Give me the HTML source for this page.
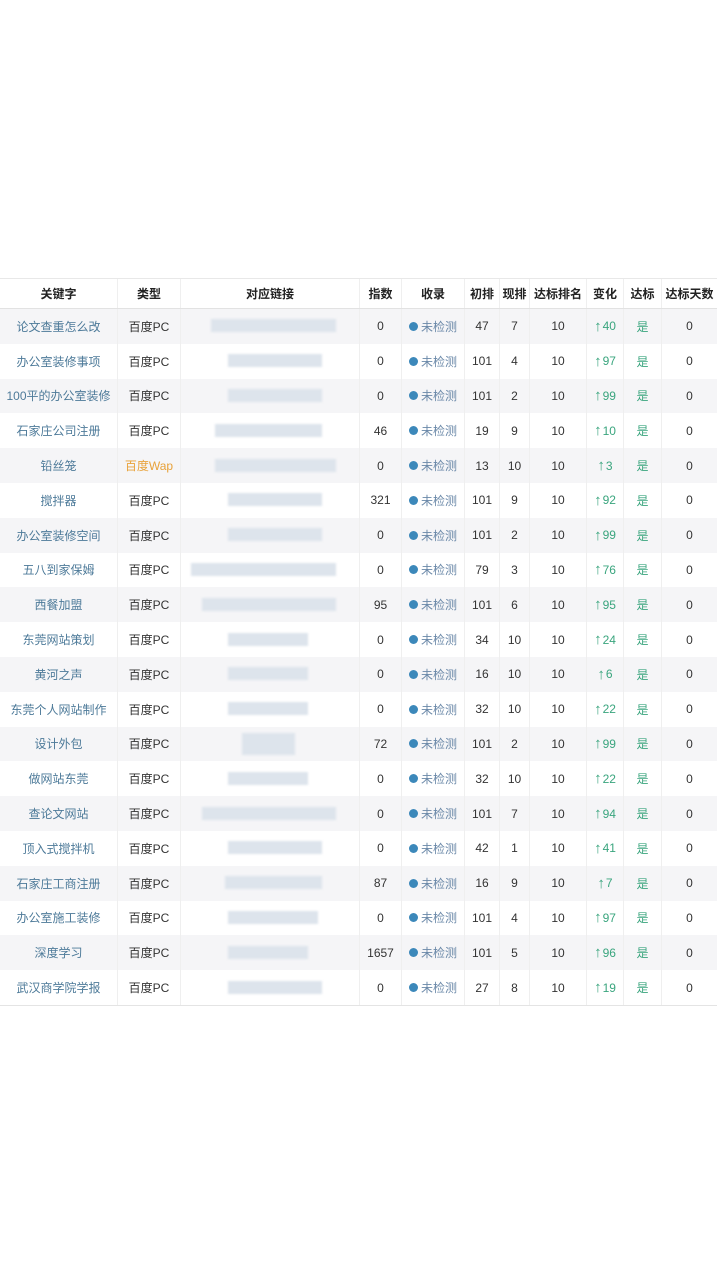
<!DOCTYPE html>
<html><head><meta charset="utf-8"><style>
html,body{margin:0;padding:0;background:#fff;width:720px;height:1280px;overflow:hidden}
body{font-family:"Liberation Sans","Noto Sans CJK SC",sans-serif;font-size:12px;color:#333;position:relative}
.tb{position:absolute;left:0;top:278px;width:717px;border-top:1px solid #e8e8e8;border-bottom:1px solid #e4e4e4}
.r{display:flex;height:34.8px;align-items:center;position:relative}
.h{height:29px;font-weight:bold;color:#222;border-bottom:1px solid #e2e2e2;background:#fff}
.r:nth-child(even){background:#f5f5f7}
.c{text-align:center;height:100%;display:flex;align-items:center;justify-content:center;box-sizing:border-box;border-right:1px solid #efefef;white-space:nowrap}
.c1{width:118px}.c2{width:63px}.c3{width:179px;position:relative}.c4{width:42px}.c5{width:63px}.c6{width:35px}.c7{width:30px}.c8{width:57px}.c9{width:37px}.c10{width:38px}.c11{width:55px;border-right:none}
.kw{color:#4d7a99}
.wap{color:#e8a23a}
.dot{display:inline-block;width:9px;height:9px;border-radius:50%;background:#3c88ba;margin-right:3px}
.un{color:#6a88a8}
.g{color:#3aa57e}
.g b{font-size:15px;font-weight:bold;margin-right:1px}
.bar{position:absolute;height:13px;background:#dde4ec;filter:blur(1px);top:50%;margin-top:-7px}
</style></head><body>
<div class="tb">
<div class="r h"><div class="c c1">关键字</div><div class="c c2">类型</div><div class="c c3">对应链接</div><div class="c c4">指数</div><div class="c c5">收录</div><div class="c c6">初排</div><div class="c c7">现排</div><div class="c c8">达标排名</div><div class="c c9">变化</div><div class="c c10">达标</div><div class="c c11">达标天数</div></div>

<div class="r"><div class="c c1 kw">论文查重怎么改</div><div class="c c2">百度PC</div><div class="c c3"><span class="bar" style="left:30px;width:125px"></span></div><div class="c c4">0</div><div class="c c5"><span class="dot"></span><span class="un">未检测</span></div><div class="c c6">47</div><div class="c c7">7</div><div class="c c8">10</div><div class="c c9 g"><b>↑</b>40</div><div class="c c10 g">是</div><div class="c c11">0</div></div>
<div class="r"><div class="c c1 kw">办公室装修事项</div><div class="c c2">百度PC</div><div class="c c3"><span class="bar" style="left:47px;width:94px"></span></div><div class="c c4">0</div><div class="c c5"><span class="dot"></span><span class="un">未检测</span></div><div class="c c6">101</div><div class="c c7">4</div><div class="c c8">10</div><div class="c c9 g"><b>↑</b>97</div><div class="c c10 g">是</div><div class="c c11">0</div></div>
<div class="r"><div class="c c1 kw">100平的办公室装修</div><div class="c c2">百度PC</div><div class="c c3"><span class="bar" style="left:47px;width:94px"></span></div><div class="c c4">0</div><div class="c c5"><span class="dot"></span><span class="un">未检测</span></div><div class="c c6">101</div><div class="c c7">2</div><div class="c c8">10</div><div class="c c9 g"><b>↑</b>99</div><div class="c c10 g">是</div><div class="c c11">0</div></div>
<div class="r"><div class="c c1 kw">石家庄公司注册</div><div class="c c2">百度PC</div><div class="c c3"><span class="bar" style="left:34px;width:107px"></span></div><div class="c c4">46</div><div class="c c5"><span class="dot"></span><span class="un">未检测</span></div><div class="c c6">19</div><div class="c c7">9</div><div class="c c8">10</div><div class="c c9 g"><b>↑</b>10</div><div class="c c10 g">是</div><div class="c c11">0</div></div>
<div class="r"><div class="c c1 kw">铅丝笼</div><div class="c c2 wap">百度Wap</div><div class="c c3"><span class="bar" style="left:34px;width:121px"></span></div><div class="c c4">0</div><div class="c c5"><span class="dot"></span><span class="un">未检测</span></div><div class="c c6">13</div><div class="c c7">10</div><div class="c c8">10</div><div class="c c9 g"><b>↑</b>3</div><div class="c c10 g">是</div><div class="c c11">0</div></div>
<div class="r"><div class="c c1 kw">搅拌器</div><div class="c c2">百度PC</div><div class="c c3"><span class="bar" style="left:47px;width:94px"></span></div><div class="c c4">321</div><div class="c c5"><span class="dot"></span><span class="un">未检测</span></div><div class="c c6">101</div><div class="c c7">9</div><div class="c c8">10</div><div class="c c9 g"><b>↑</b>92</div><div class="c c10 g">是</div><div class="c c11">0</div></div>
<div class="r"><div class="c c1 kw">办公室装修空间</div><div class="c c2">百度PC</div><div class="c c3"><span class="bar" style="left:47px;width:94px"></span></div><div class="c c4">0</div><div class="c c5"><span class="dot"></span><span class="un">未检测</span></div><div class="c c6">101</div><div class="c c7">2</div><div class="c c8">10</div><div class="c c9 g"><b>↑</b>99</div><div class="c c10 g">是</div><div class="c c11">0</div></div>
<div class="r"><div class="c c1 kw">五八到家保姆</div><div class="c c2">百度PC</div><div class="c c3"><span class="bar" style="left:10px;width:145px"></span></div><div class="c c4">0</div><div class="c c5"><span class="dot"></span><span class="un">未检测</span></div><div class="c c6">79</div><div class="c c7">3</div><div class="c c8">10</div><div class="c c9 g"><b>↑</b>76</div><div class="c c10 g">是</div><div class="c c11">0</div></div>
<div class="r"><div class="c c1 kw">西餐加盟</div><div class="c c2">百度PC</div><div class="c c3"><span class="bar" style="left:21px;width:134px"></span></div><div class="c c4">95</div><div class="c c5"><span class="dot"></span><span class="un">未检测</span></div><div class="c c6">101</div><div class="c c7">6</div><div class="c c8">10</div><div class="c c9 g"><b>↑</b>95</div><div class="c c10 g">是</div><div class="c c11">0</div></div>
<div class="r"><div class="c c1 kw">东莞网站策划</div><div class="c c2">百度PC</div><div class="c c3"><span class="bar" style="left:47px;width:80px"></span></div><div class="c c4">0</div><div class="c c5"><span class="dot"></span><span class="un">未检测</span></div><div class="c c6">34</div><div class="c c7">10</div><div class="c c8">10</div><div class="c c9 g"><b>↑</b>24</div><div class="c c10 g">是</div><div class="c c11">0</div></div>
<div class="r"><div class="c c1 kw">黄河之声</div><div class="c c2">百度PC</div><div class="c c3"><span class="bar" style="left:47px;width:80px"></span></div><div class="c c4">0</div><div class="c c5"><span class="dot"></span><span class="un">未检测</span></div><div class="c c6">16</div><div class="c c7">10</div><div class="c c8">10</div><div class="c c9 g"><b>↑</b>6</div><div class="c c10 g">是</div><div class="c c11">0</div></div>
<div class="r"><div class="c c1 kw">东莞个人网站制作</div><div class="c c2">百度PC</div><div class="c c3"><span class="bar" style="left:47px;width:80px"></span></div><div class="c c4">0</div><div class="c c5"><span class="dot"></span><span class="un">未检测</span></div><div class="c c6">32</div><div class="c c7">10</div><div class="c c8">10</div><div class="c c9 g"><b>↑</b>22</div><div class="c c10 g">是</div><div class="c c11">0</div></div>
<div class="r"><div class="c c1 kw">设计外包</div><div class="c c2">百度PC</div><div class="c c3"><span class="bar" style="left:61px;width:53px;height:22px;margin-top:-11px"></span></div><div class="c c4">72</div><div class="c c5"><span class="dot"></span><span class="un">未检测</span></div><div class="c c6">101</div><div class="c c7">2</div><div class="c c8">10</div><div class="c c9 g"><b>↑</b>99</div><div class="c c10 g">是</div><div class="c c11">0</div></div>
<div class="r"><div class="c c1 kw">做网站东莞</div><div class="c c2">百度PC</div><div class="c c3"><span class="bar" style="left:47px;width:80px"></span></div><div class="c c4">0</div><div class="c c5"><span class="dot"></span><span class="un">未检测</span></div><div class="c c6">32</div><div class="c c7">10</div><div class="c c8">10</div><div class="c c9 g"><b>↑</b>22</div><div class="c c10 g">是</div><div class="c c11">0</div></div>
<div class="r"><div class="c c1 kw">查论文网站</div><div class="c c2">百度PC</div><div class="c c3"><span class="bar" style="left:21px;width:134px"></span></div><div class="c c4">0</div><div class="c c5"><span class="dot"></span><span class="un">未检测</span></div><div class="c c6">101</div><div class="c c7">7</div><div class="c c8">10</div><div class="c c9 g"><b>↑</b>94</div><div class="c c10 g">是</div><div class="c c11">0</div></div>
<div class="r"><div class="c c1 kw">顶入式搅拌机</div><div class="c c2">百度PC</div><div class="c c3"><span class="bar" style="left:47px;width:94px"></span></div><div class="c c4">0</div><div class="c c5"><span class="dot"></span><span class="un">未检测</span></div><div class="c c6">42</div><div class="c c7">1</div><div class="c c8">10</div><div class="c c9 g"><b>↑</b>41</div><div class="c c10 g">是</div><div class="c c11">0</div></div>
<div class="r"><div class="c c1 kw">石家庄工商注册</div><div class="c c2">百度PC</div><div class="c c3"><span class="bar" style="left:44px;width:97px"></span></div><div class="c c4">87</div><div class="c c5"><span class="dot"></span><span class="un">未检测</span></div><div class="c c6">16</div><div class="c c7">9</div><div class="c c8">10</div><div class="c c9 g"><b>↑</b>7</div><div class="c c10 g">是</div><div class="c c11">0</div></div>
<div class="r"><div class="c c1 kw">办公室施工装修</div><div class="c c2">百度PC</div><div class="c c3"><span class="bar" style="left:47px;width:90px"></span></div><div class="c c4">0</div><div class="c c5"><span class="dot"></span><span class="un">未检测</span></div><div class="c c6">101</div><div class="c c7">4</div><div class="c c8">10</div><div class="c c9 g"><b>↑</b>97</div><div class="c c10 g">是</div><div class="c c11">0</div></div>
<div class="r"><div class="c c1 kw">深度学习</div><div class="c c2">百度PC</div><div class="c c3"><span class="bar" style="left:47px;width:80px"></span></div><div class="c c4">1657</div><div class="c c5"><span class="dot"></span><span class="un">未检测</span></div><div class="c c6">101</div><div class="c c7">5</div><div class="c c8">10</div><div class="c c9 g"><b>↑</b>96</div><div class="c c10 g">是</div><div class="c c11">0</div></div>
<div class="r"><div class="c c1 kw">武汉商学院学报</div><div class="c c2">百度PC</div><div class="c c3"><span class="bar" style="left:47px;width:94px"></span></div><div class="c c4">0</div><div class="c c5"><span class="dot"></span><span class="un">未检测</span></div><div class="c c6">27</div><div class="c c7">8</div><div class="c c8">10</div><div class="c c9 g"><b>↑</b>19</div><div class="c c10 g">是</div><div class="c c11">0</div></div>
</div>
</body></html>
